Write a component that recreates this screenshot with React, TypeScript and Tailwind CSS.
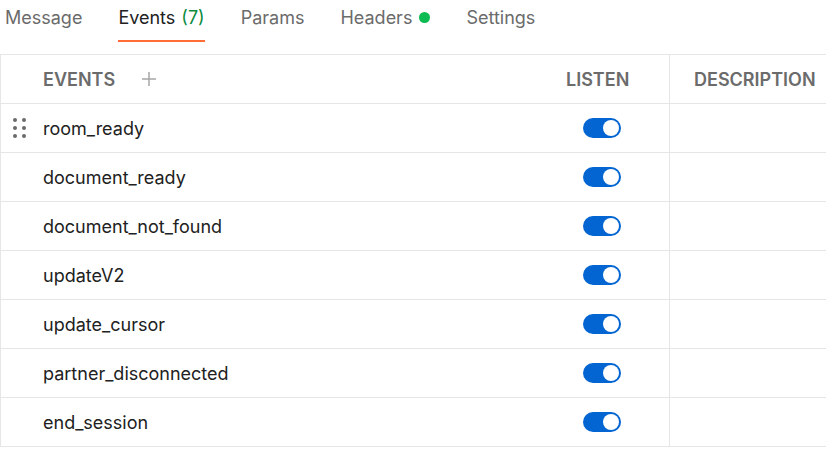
import { useState } from "react";

const tabs = ["Message", "Events", "Params", "Headers", "Settings"];

const events = [
  "room_ready",
  "document_ready",
  "document_not_found",
  "updateV2",
  "update_cursor",
  "partner_disconnected",
  "end_session",
];

function DragHandle() {
  return (
    <div className="grid grid-cols-2 gap-x-[5px] gap-y-[4px]">
      {[0, 1, 2, 3, 4, 5].map((i) => (
        <span key={i} className="block h-[4px] w-[4px] rounded-full bg-[#6b6b6b]" />
      ))}
    </div>
  );
}

function Toggle({ on, onClick }: { on: boolean; onClick: () => void }) {
  return (
    <button
      onClick={onClick}
      className={`flex h-[20px] w-[38px] items-center rounded-full px-[2px] ${
        on ? "justify-end bg-[#0265d2]" : "justify-start bg-[#c9c9c9]"
      }`}
    >
      <span className="block h-[16px] w-[16px] rounded-full bg-white" />
    </button>
  );
}

export default function App() {
  const [active, setActive] = useState("Events");
  const [listen, setListen] = useState(events.map(() => true));

  return (
    <div className="h-[450px] w-[826px] overflow-hidden bg-white font-['Inter',sans-serif] text-[18px] text-[#212121]">
      {/* Tabs */}
      <div className="flex h-[54px] gap-9 pl-[5px]">
        {tabs.map((t) => (
          <button
            key={t}
            onClick={() => setActive(t)}
            className={`flex h-[42px] items-center gap-[6px] border-b-2 pb-[5px] leading-6 ${
              active === t ? "border-[#ff6c37] text-[#212121]" : "border-transparent text-[#6b6b6b]"
            }`}
          >
            {t}
            {t === "Events" && <span className="text-[#0c8a3e]">({events.length})</span>}
            {t === "Headers" && <span className="ml-[1px] block h-[11px] w-[11px] rounded-full bg-[#0cbb52]" />}
          </button>
        ))}
      </div>

      {/* Table */}
      <div className="w-[900px] border-l border-t border-[#e6e6e6]">
        <div className="flex h-[49px] border-b border-[#e6e6e6] font-semibold text-[#6b6b6b]">
          <div className="flex w-[519px] items-center gap-[27px] pl-[42px]">
            <span>EVENTS</span>
            <svg width="14" height="14" viewBox="0 0 14 14" className="text-[#a6a6a6]">
              <path d="M7 0v14M0 7h14" stroke="currentColor" strokeWidth="1.5" />
            </svg>
          </div>
          <div className="flex w-[150px] items-center border-r border-[#e6e6e6] pl-[46px]">LISTEN</div>
          <div className="flex w-[230px] items-center pl-[24px]">DESCRIPTION</div>
        </div>
        {events.map((e, i) => (
          <div key={e} className="flex h-[49px] border-b border-[#e6e6e6]">
            <div className="flex w-[519px] items-center">
              <div className="flex w-[42px] items-center pl-[12px]">{i === 0 && <DragHandle />}</div>
              <span>{e}</span>
            </div>
            <div className="flex w-[150px] items-center border-r border-[#e6e6e6] pl-[63px]">
              <Toggle
                on={listen[i]}
                onClick={() => setListen(listen.map((v, j) => (j === i ? !v : v)))}
              />
            </div>
            <div className="w-[230px]" />
          </div>
        ))}
      </div>
    </div>
  );
}
